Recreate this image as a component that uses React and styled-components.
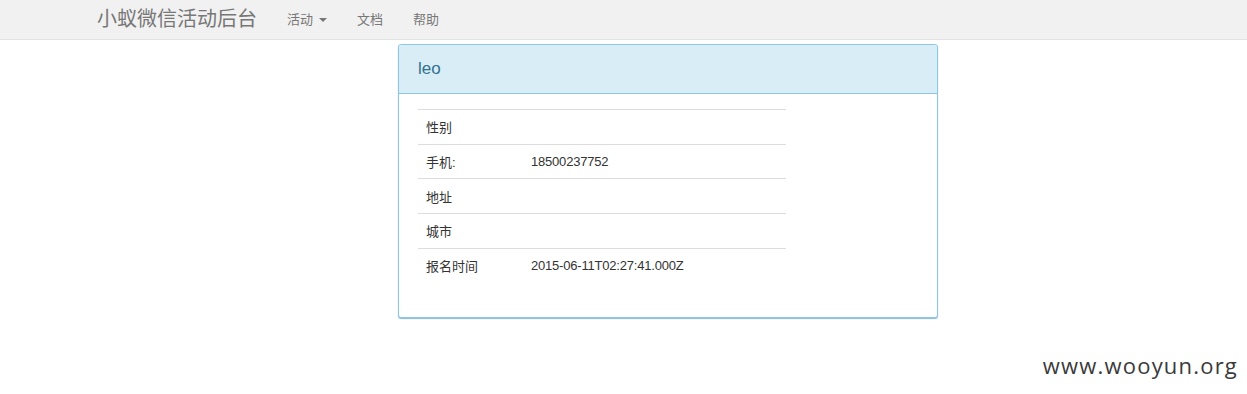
import React from 'react';
import styled, { createGlobalStyle } from 'styled-components';

const GlobalStyle = createGlobalStyle`
  html, body {
    margin: 0;
    padding: 0;
    background: #fff;
  }
  body {
    font-family: "Liberation Sans", Arial, "Noto Sans CJK SC", sans-serif;
    font-size: 13px;
    color: #333;
  }
`;

const rows = [
  { label: '性别', value: '' },
  { label: '手机:', value: '18500237752' },
  { label: '地址', value: '' },
  { label: '城市', value: '' },
  { label: '报名时间', value: '2015-06-11T02:27:41.000Z' },
];

const App = () => (
  <Page>
    <GlobalStyle />
    <Navbar>
      <Brand>小蚁微信活动后台</Brand>
      <NavList>
        <NavItem>
          活动 <Caret />
        </NavItem>
        <NavItem>文档</NavItem>
        <NavItem>帮助</NavItem>
      </NavList>
    </Navbar>

    <Main>
      <Panel>
        <PanelHeading>leo</PanelHeading>
        <PanelBody>
          <Table>
            <tbody>
              {rows.map(r => (
                <tr key={r.label}>
                  <LabelCell>{r.label}</LabelCell>
                  <ValueCell>{r.value}</ValueCell>
                </tr>
              ))}
            </tbody>
          </Table>
        </PanelBody>
      </Panel>
    </Main>

    <Watermark>www.wooyun.org</Watermark>
  </Page>
);

const Page = styled.div`
  position: relative;
  width: 100%;
  height: 394px;
  overflow: hidden;
`;

const Navbar = styled.nav`
  display: flex;
  align-items: center;
  height: 39px;
  padding-left: 82px;
  background: #f1f1f1;
  border-bottom: 1px solid #e2e2e2;
`;

const Brand = styled.a`
  padding: 0 15px;
  font-family: "Liberation Sans", "Noto Sans CJK SC", sans-serif;
  font-size: 20px;
  line-height: 39px;
  color: #777;
`;

const NavList = styled.ul`
  display: flex;
  margin: 0;
  padding: 0;
  list-style: none;
`;

const NavItem = styled.li`
  display: flex;
  align-items: center;
  gap: 4px;
  padding: 0 15px;
  font-size: 13px;
  line-height: 39px;
  color: #777;
`;

const Caret = styled.span`
  display: inline-block;
  width: 0;
  height: 0;
  margin-left: 2px;
  border-top: 4px solid #777;
  border-left: 4px solid transparent;
  border-right: 4px solid transparent;
`;

const Main = styled.main`
  padding: 4px 0 0 398px;
`;

const Panel = styled.div`
  width: 538px;
  border: 1px solid #8cc7e7;
  border-radius: 3px;
  background: #fff;
  box-shadow: 0 1px 1px rgba(60, 140, 190, 0.6);
`;

const PanelHeading = styled.div`
  height: 48px;
  padding: 0 19px;
  background: #d9edf7;
  border-bottom: 1px solid #8cc7e7;
  border-radius: 3px 3px 0 0;
  font-size: 17px;
  line-height: 48px;
  color: #31708f;
`;

const PanelBody = styled.div`
  padding: 15px 19px;
`;

const Table = styled.table`
  width: 368px;
  margin-bottom: 20px;
  border-collapse: collapse;

  td {
    height: 33.7px;
    padding: 0 8px;
    border-top: 1px solid #ddd;
    vertical-align: middle;
    font-size: 13px;
    color: #333;
  }
`;

const LabelCell = styled.td`
  width: 89px;
`;

const ValueCell = styled.td`
  letter-spacing: -0.2px;
`;

const Watermark = styled.div`
  position: absolute;
  right: 9px;
  bottom: 14px;
  font-family: "Open Sans", sans-serif;
  font-size: 22px;
  letter-spacing: 1.2px;
  color: #3a3a3a;
`;

export default App;
